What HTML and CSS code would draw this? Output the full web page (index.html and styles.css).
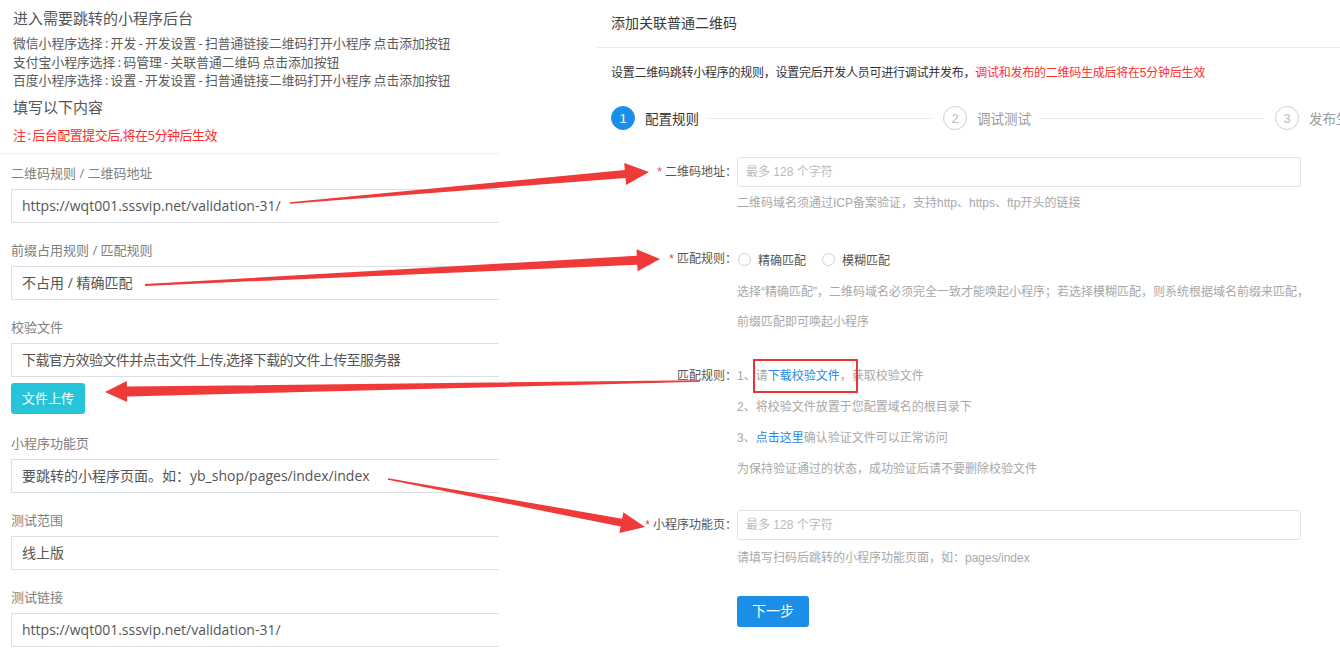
FILE: index.html
```html
<!DOCTYPE html>
<html lang="zh-CN">
<head>
<meta charset="utf-8">
<title>关联普通二维码</title>
<link rel="stylesheet" href="styles.css">
</head>
<body>
<div class="page">
  <section class="left">
    <div class="intro">
      <h1 class="intro-title">进入需要跳转的小程序后台</h1>
      <p class="intro-lines">微信小程序选择 : 开发 - 开发设置 - 扫普通链接二维码打开小程序 点击添加按钮<br>支付宝小程序选择 : 码管理 - 关联普通二维码 点击添加按钮<br>百度小程序选择 : 设置 - 开发设置 - 扫普通链接二维码打开小程序 点击添加按钮</p>
      <h2 class="intro-title sub">填写以下内容</h2>
      <p class="note">注 : 后台配置提交后,将在5分钟后生效</p>
    </div>
    <div class="fields">
      <div class="field">
        <div class="f-label">二维码规则 / 二维码地址</div>
        <div class="f-box">https://wqt001.sssvip.net/validation-31/</div>
      </div>
      <div class="field">
        <div class="f-label">前缀占用规则 / 匹配规则</div>
        <div class="f-box">不占用 / 精确匹配</div>
      </div>
      <div class="field">
        <div class="f-label">校验文件</div>
        <div class="f-box cjk-tight">下载官方效验文件并点击文件上传,选择下载的文件上传至服务器</div>
        <div class="upload-btn">文件上传</div>
      </div>
      <div class="field after-btn">
        <div class="f-label">小程序功能页</div>
        <div class="f-box">要跳转的小程序页面。如：yb_shop/pages/index/index</div>
      </div>
      <div class="field">
        <div class="f-label">测试范围</div>
        <div class="f-box">线上版</div>
      </div>
      <div class="field">
        <div class="f-label">测试链接</div>
        <div class="f-box">https://wqt001.sssvip.net/validation-31/</div>
      </div>
    </div>
  </section>

  <section class="right">
    <div class="r-head">添加关联普通二维码</div>
    <p class="r-desc">设置二维码跳转小程序的规则，设置完后开发人员可进行调试并发布，<span class="red">调试和发布的二维码生成后将在5分钟后生效</span></p>

    <div class="steps">
      <div class="step active"><span class="num">1</span><span class="s-text">配置规则</span><span class="s-line"></span></div>
      <div class="step"><span class="num">2</span><span class="s-text">调试测试</span><span class="s-line"></span></div>
      <div class="step last"><span class="num">3</span><span class="s-text">发布生效</span></div>
    </div>

    <div class="form">
      <div class="row">
        <div class="r-label tall"><i class="req">*</i>二维码地址：</div>
        <div class="ctrl">
          <div class="r-input">最多 128 个字符</div>
          <p class="hint first">二维码域名须通过ICP备案验证，支持http、https、ftp开头的链接</p>
        </div>
      </div>

      <div class="row gap-big">
        <div class="r-label line20"><i class="req">*</i>匹配规则：</div>
        <div class="ctrl">
          <div class="radios">
            <span class="radio"></span><span class="radio-text">精确匹配</span>
            <span class="radio second"></span><span class="radio-text">模糊匹配</span>
          </div>
          <div class="hint-block">
            <p class="hint l30">选择“精确匹配”，二维码域名必须完全一致才能唤起小程序；若选择模糊匹配，则系统根据域名前缀来匹配，</p>
            <p class="hint l30">前缀匹配即可唤起小程序</p>
          </div>
        </div>
      </div>

      <div class="row gap-mid">
        <div class="r-label line31">匹配规则：</div>
        <div class="ctrl">
          <p class="hint l31">1、请<span class="link">下载校验文件</span>，获取校验文件</p>
          <p class="hint l31">2、将校验文件放置于您配置域名的根目录下</p>
          <p class="hint l31">3、<span class="link">点击这里</span>确认验证文件可以正常访问</p>
          <p class="hint l31">为保持验证通过的状态，成功验证后请不要删除校验文件</p>
        </div>
      </div>

      <div class="row gap-mid2">
        <div class="r-label tall"><i class="req">*</i>小程序功能页：</div>
        <div class="ctrl">
          <div class="r-input">最多 128 个字符</div>
          <p class="hint second">请填写扫码后跳转的小程序功能页面，如：pages/index</p>
        </div>
      </div>

      <div class="row gap-btn">
        <div class="r-label"></div>
        <div class="ctrl">
          <div class="next-btn">下一步</div>
        </div>
      </div>
    </div>
  </section>
</div>

<svg class="overlay" width="1340" height="663" viewBox="0 0 1340 663" xmlns="http://www.w3.org/2000/svg">
  <g fill="#f03a3a">
    <polygon points="290.1,203.8 625.4,178.1 626.1,185.1 649,172 624.2,163.1 624.8,170.1 289.9,202.2"/>
    <polygon points="145.04,285.9 637.2,264.7 637.6,271.2 660,259 636.5,249.2 636.8,255.7 144.96,284.1"/>
    <polygon points="700,380.2 126.9,386.6 126.8,381.1 105,392 127.2,402.1 127.1,396.6 700,381.8"/>
    <polygon points="387.87,479.69 620.67,526.53 619.47,532.92 645,527 623.33,512.28 622.13,518.67 388.13,478.31"/>
  </g>
  <rect x="754" y="360" width="103" height="32" fill="none" stroke="#ec3434" stroke-width="2"/>
</svg>
</body>
</html>
```

FILE: styles.css
```css
html, body {
  margin: 0;
  padding: 0;
  background: #ffffff;
  overflow: hidden;
}

body {
  position: relative;
  width: 1340px;
  height: 663px;
  font-family: "Open Sans", "Noto Sans CJK SC", sans-serif;
  color: #555;
}

.page {
  display: flex;
  align-items: flex-start;
}

/* ---------- left column ---------- */
.left {
  width: 499px;
  flex: 0 0 499px;
}

.intro {
  padding-left: 13px;
}

.intro-title {
  margin: 8px 0 0;
  font-size: 15px;
  line-height: 20px;
  font-weight: normal;
  color: #555;
}

.intro-title.sub {
  margin-top: 7.5px;
}

.intro-lines {
  margin: 6px 0 0;
  font-size: 12.8px;
  line-height: 18.5px;
  color: #5a5a5a;
  word-spacing: -1px;
}

.note {
  margin: 9px 0 0;
  font-size: 13px;
  line-height: 18px;
  color: #ff2a2a;
  word-spacing: -1px;
  letter-spacing: -0.5px;
}

.fields {
  margin-top: 9px;
  border-top: 1px solid #eeeff2;
  padding-top: 9px;
}

.field {
  margin-left: 11px;
  margin-bottom: 17px;
}

.field.after-btn {
  margin-top: 19px;
}

.f-label {
  font-size: 13px;
  line-height: 20px;
  color: #808080;
}

.f-box {
  margin-top: 6px;
  height: 32px;
  border: 1px solid #dcdfe6;
  border-right: none;
  padding-left: 10px;
  font-size: 14px;
  line-height: 32px;
  color: #555;
  white-space: nowrap;
  overflow: hidden;
}

.f-box.cjk-tight {
  letter-spacing: -0.6px;
}

.upload-btn {
  display: inline-block;
  margin-top: 6px;
  height: 31px;
  padding: 0 11px;
  border-radius: 3px;
  background: #25c4d9;
  color: #ffffff;
  font-size: 13px;
  line-height: 31px;
}

.field:has(.upload-btn) {
  margin-bottom: 0;
}

/* ---------- right panel ---------- */
.right {
  margin-left: 98px;
  flex: 1 1 auto;
  font-family: "Liberation Sans", "Noto Sans CJK SC", sans-serif;
  color: #555;
}

.r-head {
  height: 47px;
  line-height: 47px;
  padding-left: 14px;
  font-size: 14px;
  color: #3a3a3a;
  border-bottom: 1px solid #ececec;
}

.r-desc {
  margin: 16px 0 0;
  padding-left: 14px;
  font-size: 12px;
  line-height: 18px;
  color: #333;
  white-space: nowrap;
  letter-spacing: -0.25px;
}

.red {
  color: #ff3030;
}

.steps {
  margin-top: 24px;
  padding-left: 14px;
  display: flex;
  align-items: center;
  height: 24px;
  white-space: nowrap;
}

.step {
  flex: 0 0 332px;
  display: flex;
  align-items: center;
}

.step.last {
  flex: 0 0 auto;
}

.num {
  width: 22px;
  height: 22px;
  border: 1px solid #cfcfcf;
  border-radius: 50%;
  display: flex;
  align-items: center;
  justify-content: center;
  font-size: 13px;
  color: #bbbbbb;
  flex: 0 0 auto;
}

.step.active .num {
  background: #1b8fe8;
  border-color: #1b8fe8;
  color: #ffffff;
}

.s-text {
  margin-left: 10px;
  font-size: 13.5px;
  color: #9a9a9a;
}

.step.active .s-text {
  color: #333;
}

.s-line {
  flex: 1 1 auto;
  height: 1px;
  background: #e6e6e6;
  margin: 0 12px 0 10px;
}

.form {
  margin-top: 27px;
}

.row {
  display: grid;
  grid-template-columns: 140px 564px;
  align-items: start;
}

.row.gap-big { margin-top: 36px; }
.row.gap-mid { margin-top: 24px; }
.row.gap-mid2 { margin-top: 25px; }
.row.gap-btn { margin-top: 28px; }

.r-label {
  text-align: right;
  font-size: 12px;
  color: #555;
  white-space: nowrap;
}

.r-label.tall { line-height: 30px; }
.r-label.line20 { line-height: 20px; }
.r-label.line31 { line-height: 31px; }

.req {
  font-style: normal;
  color: #f03a3a;
  margin-right: 3px;
  font-size: 12px;
}

.r-input {
  height: 28px;
  border: 1px solid #e2e2e2;
  border-radius: 3px;
  padding-left: 8px;
  font-size: 12px;
  line-height: 28px;
  color: #bbbbbb;
}

.hint {
  margin: 0;
  font-size: 12px;
  color: #a8a8a8;
  white-space: nowrap;
}

.hint.first {
  margin-top: 6px;
  line-height: 20px;
}

.hint.second {
  margin-top: 8px;
  line-height: 20px;
}

.hint.l30 { line-height: 30px; }
.hint.l31 { line-height: 31px; }

.hint-block {
  margin-top: 8px;
}

.link {
  color: #1e88e5;
}

.radios {
  display: flex;
  align-items: center;
  height: 20px;
}

.radio {
  width: 11px;
  height: 11px;
  border: 1px solid #cfcfcf;
  border-radius: 50%;
  margin-left: 1px;
  margin-right: 7px;
}

.radio.second {
  margin-left: 16px;
}

.radio-text {
  font-size: 12px;
  color: #555;
}

.next-btn {
  display: inline-block;
  width: 72px;
  height: 31px;
  border-radius: 3px;
  background: #1b8fe8;
  color: #ffffff;
  font-size: 14px;
  line-height: 31px;
  text-align: center;
}

/* ---------- annotation overlay ---------- */
.overlay {
  position: absolute;
  top: 0;
  left: 0;
  pointer-events: none;
}
```
